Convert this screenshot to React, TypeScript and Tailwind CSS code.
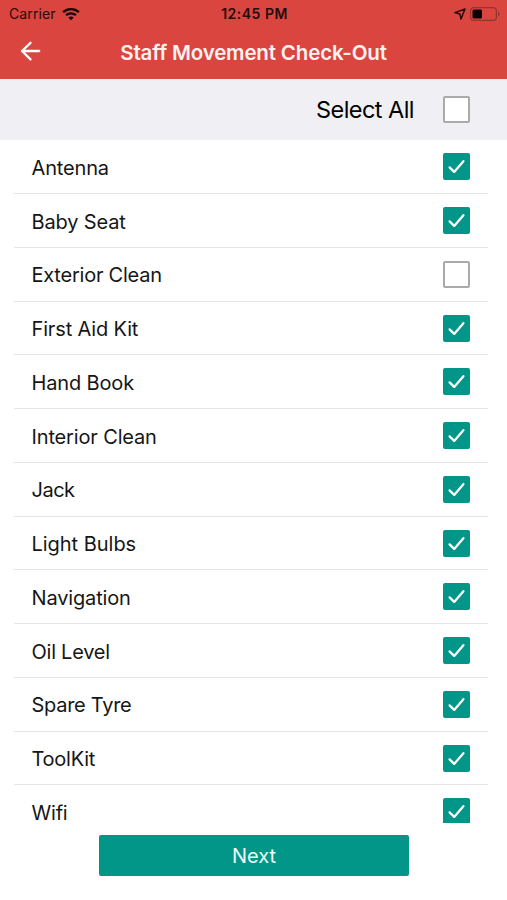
import React, { useState } from "react";

type Item = { label: string; checked: boolean; spacing: string };

const initialItems: Item[] = [
  { label: "Antenna", checked: true, spacing: "tracking-[-0.15px]" },
  { label: "Baby Seat", checked: true, spacing: "tracking-[-0.15px]" },
  { label: "Exterior Clean", checked: false, spacing: "tracking-[-0.23px]" },
  { label: "First Aid Kit", checked: true, spacing: "tracking-[-0.15px]" },
  { label: "Hand Book", checked: true, spacing: "tracking-[-0.15px]" },
  { label: "Interior Clean", checked: true, spacing: "tracking-[-0.15px]" },
  { label: "Jack", checked: true, spacing: "tracking-[-0.5px]" },
  { label: "Light Bulbs", checked: true, spacing: "tracking-[-0.03px]" },
  { label: "Navigation", checked: true, spacing: "tracking-[-0.15px]" },
  { label: "Oil Level", checked: true, spacing: "tracking-[-0.25px]" },
  { label: "Spare Tyre", checked: true, spacing: "tracking-[-0.28px]" },
  { label: "ToolKit", checked: true, spacing: "tracking-[-0.25px]" },
  { label: "Wifi", checked: true, spacing: "tracking-[-0.2px]" },
];

function Checkbox({ checked, label, onClick }: { checked: boolean; label: string; onClick: () => void }) {
  return (
    <button
      role="checkbox"
      aria-checked={checked}
      aria-label={label}
      onClick={onClick}
      className={
        checked
          ? "flex size-[27px] shrink-0 items-center justify-center rounded-[2px] bg-[#029688]"
          : "size-[27px] shrink-0 rounded-[2px] border-2 border-[#aaaaaa] bg-white"
      }
    >
      {checked && (
        <svg width="27" height="27" viewBox="0 0 27 27" fill="none" stroke="white" strokeWidth="2.3" strokeLinecap="round" strokeLinejoin="round">
          <path d="M6.6 14.4 11.2 18.9 20.4 8.2" />
        </svg>
      )}
    </button>
  );
}

function StatusBar() {
  return (
    <div className="grid h-[27px] grid-cols-3 items-center pl-[9px] pr-[7px] text-[#260b0a]">
      <div className="flex items-center gap-[6px]">
        <span className="text-[14px] leading-none tracking-[0.1px]">Carrier</span>
        <svg width="18" height="14" viewBox="0 0 19 14" fill="none" stroke="#160303" strokeWidth="2.5">
          <path d="M1.2 5.1C5.8.8 13.2.8 17.8 5.1M4.3 8.3c2.9-2.7 7.5-2.7 10.4 0" />
          <path d="M6.7 10.7c1.6-1.4 4-1.4 5.6 0L9.5 13.5z" fill="#160303" stroke="none" />
        </svg>
      </div>
      <span className="text-center text-[14px] font-semibold leading-none tracking-[0.5px]">12:45 PM</span>
      <div className="flex items-center justify-end gap-[4px]">
        <svg width="12" height="12" viewBox="0 0 12 12" fill="none" stroke="#260b0a" strokeWidth="1.5" strokeLinejoin="round">
          <path d="M.9 4.6 11 1 7 11 5.9 5.9z" />
        </svg>
        <svg width="30" height="14" viewBox="0 0 30 14" fill="none">
          <rect x=".6" y=".6" width="25.8" height="12.8" rx="3.5" stroke="#96332e" strokeWidth="1.2" />
          <rect x="2.5" y="2.5" width="9.5" height="9" rx="1.5" fill="#080101" />
          <path d="M28 4.8c2 .7 2 3.7 0 4.4z" fill="#96332e" />
        </svg>
      </div>
    </div>
  );
}

export default function App() {
  const [items, setItems] = useState(initialItems);
  const allChecked = items.every((item) => item.checked);
  const toggle = (index: number) =>
    setItems(items.map((item, i) => (i === index ? { ...item, checked: !item.checked } : item)));
  const toggleAll = () => setItems(items.map((item) => ({ ...item, checked: !allChecked })));

  return (
    <div className="flex h-[900px] w-[507px] flex-col overflow-hidden bg-white font-['Inter','Liberation_Sans',sans-serif] text-[#161616]">
      <header className="h-[79px] shrink-0 bg-[#da4540]">
        <StatusBar />
        <div className="grid h-[50px] grid-cols-[60px_1fr_60px] items-center">
          <button aria-label="Back" className="pl-[20px]">
            <svg width="22" height="22" viewBox="0 0 22 22" fill="none" stroke="white" strokeWidth="2.3" strokeLinecap="round" strokeLinejoin="round">
              <path d="M19.2 10H2M10.5 1.8 2 10l8.5 8.4" />
            </svg>
          </button>
          <h1 className="whitespace-nowrap pt-[2px] text-center text-[20.5px] font-semibold tracking-[-0.16px] text-[#fff1ef]">Staff Movement Check-Out</h1>
        </div>
      </header>
      <div className="flex h-[61px] shrink-0 items-center justify-end gap-[29px] bg-[#efeff4] pr-[37px]">
        <span className="pt-px text-[23.5px] leading-none tracking-[-0.55px] text-black">Select All</span>
        <Checkbox checked={allChecked} label="Select All" onClick={toggleAll} />
      </div>
      <ul className="h-[683px] shrink-0 overflow-hidden pl-[14px] pr-[19px] pt-[0.4px]">
        {items.map((item, i) => (
          <li key={item.label} className="flex h-[53.75px] items-center justify-between border-b border-[#e5e5e5] pl-[17.5px] pr-[18px]">
            <span className={`pt-[2px] text-[20px] leading-none ${item.spacing}`}>{item.label}</span>
            <Checkbox checked={item.checked} label={item.label} onClick={() => toggle(i)} />
          </li>
        ))}
      </ul>
      <div className="flex justify-center pl-px pt-[12px]">
        <button className="h-[41px] w-[310px] rounded-[2px] bg-[#029688] text-[20px] leading-none text-[#edfffc]">Next</button>
      </div>
    </div>
  );
}
